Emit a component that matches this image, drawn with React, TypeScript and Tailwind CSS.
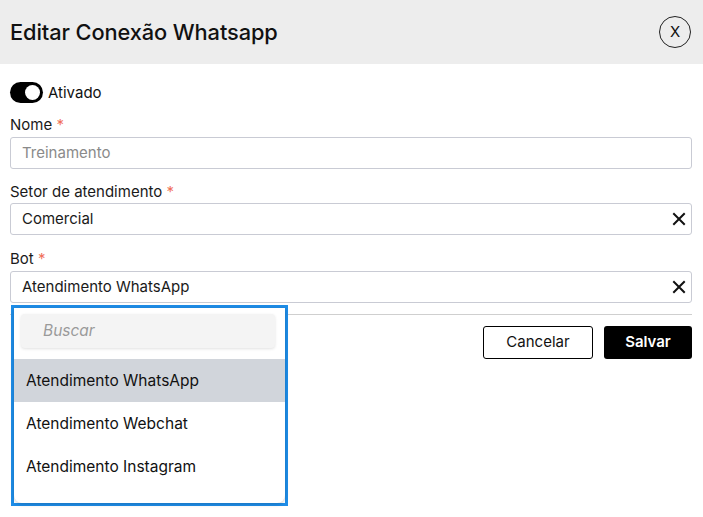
import React from "react";

function XIcon() {
  return (
    <svg width="14" height="14" viewBox="0 0 14 14" fill="none" stroke="#111" strokeWidth="2" strokeLinecap="square">
      <path d="M2 2L12 12M12 2L2 12" />
    </svg>
  );
}

function Label({ text }: { text: string }) {
  return (
    <div className="text-[15px] leading-[20px] text-[#1a1a1a]">
      {text} <span className="text-[#f0705a]">*</span>
    </div>
  );
}

export default function App() {
  return (
    <div className="relative w-[703px] h-[517px] bg-white overflow-hidden" style={{ fontFamily: "Inter, 'Noto Sans', sans-serif" }}>
      <div className="h-16 bg-[#ededed] flex items-center justify-between pl-[10px] pr-[12px]">
        <h1 className="text-[21.8px] font-medium text-[#111] tracking-[-0.1px]">Editar Conexão Whatsapp</h1>
        <button className="w-8 h-8 rounded-full border border-[#222] flex items-center justify-center text-[15px] text-[#111]">X</button>
      </div>
      <div className="pl-[10px] pr-[11px] pt-[17px]">
        <div className="flex items-center gap-[5px] h-[22px]">
          <div className="w-[33px] h-[21px] rounded-full bg-black flex items-center justify-end pr-[3px]">
            <div className="w-[15px] h-[15px] rounded-full bg-white" />
          </div>
          <span className="text-[15px] leading-[22px] text-[#111] pt-[2px]">Ativado</span>
        </div>
        <div className="mt-[12px]">
          <Label text="Nome" />
          <div className="mt-[2px] h-[32px] border border-[#c9cbd4] rounded-[3px] flex items-center px-[11px] text-[15px] text-[#8a8a8a]">Treinamento</div>
        </div>
        <div className="mt-[13px]">
          <Label text="Setor de atendimento" />
          <div className="mt-[1px] h-[32px] border border-[#c9cbd4] rounded-[3px] flex items-center justify-between pl-[11px] pr-[5px] text-[15px] text-[#1a1a1a]">
            <span>Comercial</span>
            <XIcon />
          </div>
        </div>
        <div className="mt-[14px]">
          <Label text="Bot" />
          <div className="mt-[2px] h-[32px] border border-[#c9cbd4] rounded-[3px] flex items-center justify-between pl-[11px] pr-[5px] text-[15px] text-[#1a1a1a]">
            <span>Atendimento WhatsApp</span>
            <XIcon />
          </div>
        </div>
        <div className="mt-[11px] border-t border-[#cfcfcf]" />
        <div className="mt-[11px] flex justify-end gap-[11px]">
          <button className="w-[110px] h-[33px] border border-black rounded-[3px] text-[15px] text-[#111]">Cancelar</button>
          <button className="w-[88px] h-[33px] bg-black rounded-[3px] text-[15px] font-semibold text-white">Salvar</button>
        </div>
      </div>
      <div className="absolute left-[11px] top-[305px] w-[277px] h-[201px] border-[3px] border-[#1e8de8]">
        <div className="h-full w-full bg-white rounded-b-[8px] shadow-[0_1px_4px_rgba(0,0,0,0.2)] overflow-hidden">
          <div className="pl-[7px] pr-[10px] pt-[6px] pb-[11px]">
            <div className="h-[34px] bg-[#f4f4f4] rounded-[4px] shadow-[0_1px_3px_rgba(0,0,0,0.12)] flex items-center pl-[22px] text-[15.5px] italic text-[#9a9a9a]">Buscar</div>
          </div>
          <div className="h-[43px] bg-[#d1d5db] flex items-center pl-[12px] text-[15.5px] text-[#111]">Atendimento WhatsApp</div>
          <div className="h-[43px] flex items-center pl-[12px] text-[15.5px] text-[#111]">Atendimento Webchat</div>
          <div className="h-[43px] flex items-center pl-[12px] text-[15.5px] text-[#111]">Atendimento Instagram</div>
        </div>
      </div>
    </div>
  );
}
